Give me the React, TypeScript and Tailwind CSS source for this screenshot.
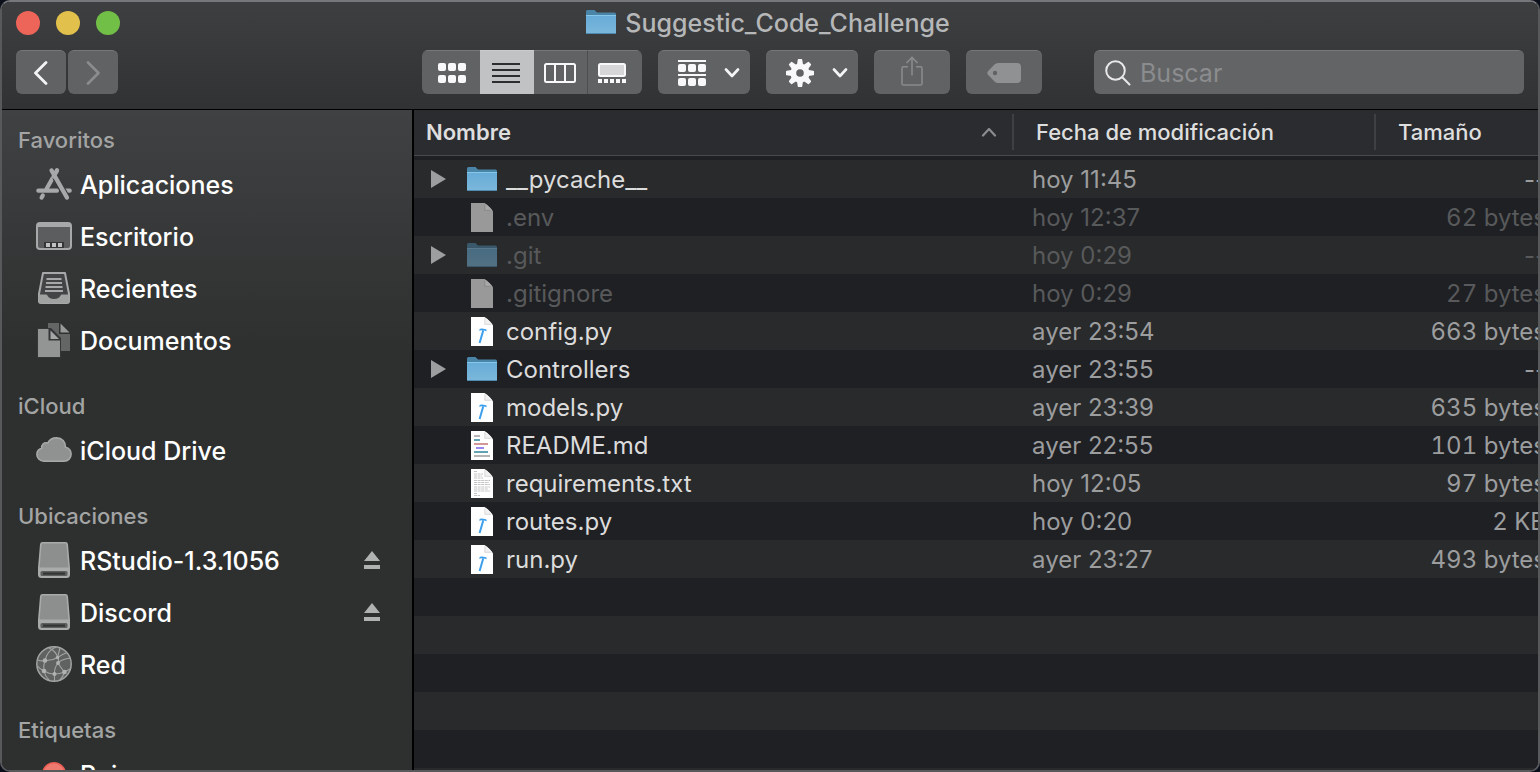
import type { ReactNode } from "react";

type Kind = "folder" | "blank" | "python" | "markdown" | "text";

interface FileRow {
  name: string;
  kind: Kind;
  modified: string;
  size: string;
  hidden?: boolean;
}

const FILES: FileRow[] = [
  { name: "__pycache__", kind: "folder", modified: "hoy 11:45", size: "--" },
  { name: ".env", kind: "blank", modified: "hoy 12:37", size: "62 bytes", hidden: true },
  { name: ".git", kind: "folder", modified: "hoy 0:29", size: "--", hidden: true },
  { name: ".gitignore", kind: "blank", modified: "hoy 0:29", size: "27 bytes", hidden: true },
  { name: "config.py", kind: "python", modified: "ayer 23:54", size: "663 bytes" },
  { name: "Controllers", kind: "folder", modified: "ayer 23:55", size: "--" },
  { name: "models.py", kind: "python", modified: "ayer 23:39", size: "635 bytes" },
  { name: "README.md", kind: "markdown", modified: "ayer 22:55", size: "101 bytes" },
  { name: "requirements.txt", kind: "text", modified: "hoy 12:05", size: "97 bytes" },
  { name: "routes.py", kind: "python", modified: "hoy 0:20", size: "2 KB" },
  { name: "run.py", kind: "python", modified: "ayer 23:27", size: "493 bytes" },
];

/* ---------- file icons ---------- */

function FolderIcon({ dim = false }: { dim?: boolean }) {
  return (
    <svg width="30" height="24" viewBox="0 0 30 24" className={dim ? "opacity-50" : ""} aria-hidden="true">
      <defs>
        <linearGradient id="folderFront" x1="0" y1="0" x2="0" y2="1">
          <stop offset="0" stopColor="#66abd8" />
          <stop offset="1" stopColor="#7cb8db" />
        </linearGradient>
      </defs>
      <path d="M0 1.5Q0 0 1.5 0H8.5L11 2.5H28.5Q30 2.5 30 4V8H0Z" fill="#4a85a8" />
      <path d="M0 5H30V22.5Q30 24 28.5 24H1.5Q0 24 0 22.5Z" fill="url(#folderFront)" />
      <path d="M0 5.5H30" stroke="#86c8ec" strokeWidth="1" />
      <path d="M0.5 23.5H29.5" stroke="#4f8bb0" strokeWidth="1" />
    </svg>
  );
}

function Page({ fill = "#ffffff", children }: { fill?: string; children?: ReactNode }) {
  const blank = fill !== "#ffffff";
  return (
    <svg width="22" height="29" viewBox="0 0 22 29" aria-hidden="true">
      <path d="M0 0H13.5Q16 1 19 4.5Q22 7.5 22 9V29H0Z" fill={fill} />
      <path d="M13.2 0.3Q14.8 3 14 7.2Q19 6.8 21.7 8.6Q20 4.5 13.2 0.3Z" fill={blank ? "#a8a8a8" : "#f1f1f1"} />
      <path d="M13.8 1.5V7.3H19.8" stroke={blank ? "#858585" : "#cfcfcf"} strokeWidth="0.8" fill="none" />
      {children}
    </svg>
  );
}

function FileIcon({ kind, dim }: { kind: Kind; dim?: boolean }) {
  if (kind === "folder") return <FolderIcon dim={dim} />;
  if (kind === "blank") return <Page fill="#999999" />;
  if (kind === "python")
    return (
      <Page>
        <path d="M12.3 13.2L8.6 26" stroke="#3d9fec" strokeWidth="2" fill="none" />
        <path d="M8.2 12.8Q9.2 11.3 11 11.5L15.2 12.3L15.8 14.2L13.2 13.6Q10.5 12.6 8.4 13.8Z" fill="#3d9fec" />
      </Page>
    );
  if (kind === "markdown")
    return (
      <Page>
        <path d="M3 5H9" stroke="#b5b5b5" strokeWidth="2" />
        <path d="M3 9H9" stroke="#62a3b4" strokeWidth="2" />
        <path d="M3 13H17" stroke="#d3969b" strokeWidth="2" />
        <path d="M5 17H13" stroke="#9a87f0" strokeWidth="2" />
        <path d="M3 21H17" stroke="#62a3b4" strokeWidth="2" />
        <path d="M3 25H19" stroke="#b5b5b5" strokeWidth="2" />
      </Page>
    );
  return (
    <Page>
      <path
        d="M3 2.5H6M3 5H12M3 7H11M3 9H12M3 11.5H19M3 13.5H18M3 15.5H19M3 18H19M3 20H17M3 22H19M3 24.5H6M3 26.5H9"
        stroke="#c4c4c4"
        strokeWidth="1"
        strokeDasharray="3 0.6"
      />
    </Page>
  );
}

/* ---------- sidebar icons ---------- */

function Side({ children }: { children: ReactNode }) {
  return (
    <svg width="36" height="36" viewBox="0 0 36 36" className="shrink-0" aria-hidden="true">
      {children}
    </svg>
  );
}

const AppsIcon = () => (
  <Side>
    <g stroke="#a7a8a9" strokeWidth="4.2" strokeLinecap="round" fill="none">
      <path d="M21 4.4L10.5 23" />
      <path d="M6.8 29.4L5.6 31.6" />
      <path d="M2.3 24.7H21" />
      <path d="M29 24.7H33.7" />
    </g>
    <path d="M15.5 4.4L31 31.6" stroke="#3a3b3c" strokeWidth="6.4" strokeLinecap="butt" />
    <path d="M21 4.4L17.5 10.6" stroke="#a7a8a9" strokeWidth="4.2" strokeLinecap="round" />
    <path d="M15.5 4.4L31 31.6" stroke="#a7a8a9" strokeWidth="4.2" strokeLinecap="round" />
  </Side>
);

const DesktopIcon = () => (
  <Side>
    <rect x="1" y="5" width="34" height="26" rx="3" fill="#5c5d5e" stroke="#a7a8a9" strokeWidth="2" />
    <path d="M1 9V7Q1 5 3 5H33Q35 5 35 7V9Z" fill="#a7a8a9" />
    <path d="M8 30V24H28V30Z" fill="#343536" />
    <path d="M10 25H14V29H10ZM16 25H20V29H16ZM22 25H26V29H22Z" fill="#c0c1c1" />
  </Side>
);

const RecentsIcon = () => (
  <Side>
    <path d="M7 3H29L33 24V31Q33 33 31 33H5Q3 33 3 31V24Z" fill="#434445" stroke="#a7a8a9" strokeWidth="2" strokeLinejoin="round" />
    <path d="M3 24.5H10Q11 24.5 11.6 25.7Q13.5 29 18 29T24.4 25.7Q25 24.5 26 24.5H33V31Q33 33 31 33H5Q3 33 3 31Z" fill="#a0a1a1" />
    <path d="M10.5 9H25.5M10 13H26M9.500 17H26.500M9 21H27" stroke="#a7a8a9" strokeWidth="2" />
  </Side>
);

const DocumentsIcon = () => (
  <Side>
    <path d="M12 1H23V12H34V29H12Z" fill="#646565" />
    <path d="M24.5 1.5L33.5 10.5H24.5Z" fill="#989999" />
    <path d="M1 6H15L25 16V36H1Z" fill="#353637" />
    <path d="M2 7H12.5V18.5H24V35H2Z" fill="#939494" />
    <path d="M14.5 8.5L23 17H14.5Z" fill="#a5a6a6" />
  </Side>
);

const CloudIcon = () => (
  <Side>
    <path
      d="M8 29.2C4 29.2 0.9 26.3 0.9 22.4C0.9 19.2 3 16.9 5.8 16.2C5.2 12.5 8.2 9.8 11.8 11C13.3 7.7 16.8 5.9 20.6 5.9C26 5.9 29.7 9.8 29.5 15.2C32.9 16 35.1 18.6 35.1 22C35.1 26.2 32.2 29.2 28 29.2Z"
      fill="#909292"
      stroke="#a7a8a8"
      strokeWidth="1.6"
    />
  </Side>
);

const DriveIcon = () => (
  <Side>
    <path d="M6.5 0.8H29.5Q31 0.8 31.2 2.4L33.2 26V32.5Q33.2 35.2 30.5 35.2H5.5Q2.8 35.2 2.8 32.5V26L4.8 2.4Q5 0.8 6.5 0.8Z" fill="#8d8f8f" stroke="#a9aaaa" strokeWidth="1.6" />
    <path d="M3 25.5H33V32.5Q33 35 30.5 35H5.5Q3 35 3 32.5Z" fill="#a9aaaa" />
    <rect x="4.5" y="29" width="27" height="5" rx="1.5" fill="#5d5f5f" />
    <rect x="7" y="30.5" width="22" height="2.2" fill="#333535" />
    <path d="M5 34.8H31" stroke="#a9aaaa" strokeWidth="1.4" />
  </Side>
);

const GlobeIcon = () => (
  <Side>
    <circle cx="18" cy="18" r="17.2" fill="#606262" stroke="#a2a4a4" strokeWidth="1.5" />
    <g stroke="#a2a4a4" strokeWidth="1.1" fill="none">
      <path d="M20 1Q11 5 9 14.500Q5 15.500 2 14" />
      <path d="M9 14.500Q16 15 21.500 11.500Q27 8 31 6.500" />
      <path d="M13 2Q20 5 22 12T22 17Q26 13 34.500 12" />
      <path d="M9 14.500Q7 20 8 25Q13 28 18.500 28Q24 28 28.500 26" />
      <path d="M22 17Q18 22 18.500 28L18.500 35" />
      <path d="M22 17Q25 22 28.500 26L34 23" />
      <path d="M8 25Q9 30 13 34" />
      <path d="M8 25Q4 23 1.500 20" />
      <path d="M28.500 26Q27 31 24 34" />
      <path d="M24 2Q23 6 21.500 11.500" />
    </g>
    <g fill="#b0b2b2">
      <circle cx="9" cy="14.500" r="2.300" />
      <circle cx="21.500" cy="11.500" r="1.700" />
      <circle cx="22" cy="17" r="1.900" />
      <circle cx="8" cy="25" r="2.300" />
      <circle cx="18.500" cy="28" r="2" />
      <circle cx="28.500" cy="26" r="2.300" />
    </g>
  </Side>
);

const RedTagIcon = () => (
  <Side>
    <circle cx="18" cy="18" r="11.200" fill="#ef7a70" stroke="#ec5f55" strokeWidth="1.600" />
  </Side>
);

const SECTIONS: { title: string; items: { label: string; icon: ReactNode; eject?: boolean }[] }[] = [
  {
    title: "Favoritos",
    items: [
      { label: "Aplicaciones", icon: <AppsIcon /> },
      { label: "Escritorio", icon: <DesktopIcon /> },
      { label: "Recientes", icon: <RecentsIcon /> },
      { label: "Documentos", icon: <DocumentsIcon /> },
    ],
  },
  { title: "iCloud", items: [{ label: "iCloud Drive", icon: <CloudIcon /> }] },
  {
    title: "Ubicaciones",
    items: [
      { label: "RStudio-1.3.1056", icon: <DriveIcon />, eject: true },
      { label: "Discord", icon: <DriveIcon />, eject: true },
      { label: "Red", icon: <GlobeIcon /> },
    ],
  },
  { title: "Etiquetas", items: [{ label: "Rojo", icon: <RedTagIcon /> }] },
];

/* ---------- toolbar icons ---------- */

const Chevron = () => (
  <svg width="16" height="10" viewBox="0 0 16 10" fill="none" aria-hidden="true">
    <path d="M2 1.500L8 8L14 1.500" stroke="#f5f5f7" strokeWidth="2.600" strokeLinecap="round" strokeLinejoin="round" />
  </svg>
);

const Squares = ({ y }: { y: number }) => (
  <g fill="#f8f8fa">
    <rect x="0" y={y} width="8" height="8" rx="2" />
    <rect x="10" y={y} width="8" height="8" rx="2" />
    <rect x="20" y={y} width="8" height="8" rx="2" />
  </g>
);

const GridIcon = () => (
  <svg width="28" height="20" viewBox="0 0 28 20" aria-hidden="true">
    <Squares y={0} />
    <Squares y={12} />
  </svg>
);

const ListIcon = () => (
  <svg width="28" height="20" viewBox="0 0 28 20" aria-hidden="true">
    <path d="M0 1H28M0 7H28M0 13H28M0 19H28" stroke="#2c2d2f" strokeWidth="2" />
  </svg>
);

const ColumnsIcon = () => (
  <svg width="32" height="20" viewBox="0 0 32 20" fill="none" aria-hidden="true">
    <rect x="1" y="1" width="30" height="18" rx="1.500" stroke="#f8f8fa" strokeWidth="2" />
    <path d="M11 1V19M21 1V19" stroke="#f8f8fa" strokeWidth="2" />
  </svg>
);

const GalleryIcon = () => (
  <svg width="28" height="20" viewBox="0 0 28 20" aria-hidden="true">
    <rect x="1" y="1" width="26" height="12" rx="1.500" fill="#d6d6d8" stroke="#f8f8fa" strokeWidth="2" />
    <path d="M0 16H4V20H0ZM6 16H10V20H6ZM12 16H16V20H12ZM18 16H22V20H18ZM24 16H28V20H24Z" fill="#f8f8fa" />
  </svg>
);

const GroupIcon = () => (
  <svg width="28" height="26" viewBox="0 0 28 26" aria-hidden="true">
    <path d="M0 1H28M0 15H28" stroke="#f8f8fa" strokeWidth="2" />
    <Squares y={4} />
    <Squares y={18} />
  </svg>
);

const GearIcon = () => (
  <svg width="28" height="28" viewBox="-14 -14 28 28" aria-hidden="true">
    <circle r="6.700" fill="none" stroke="#f8f8fa" strokeWidth="5.800" />
    <g fill="#f8f8fa">
      {[0, 45, 90, 135, 180, 225, 270, 315].map((a) => (
        <path key={a} d="M-3 -8.500L-2.200 -13.400Q-2 -14 -1.400 -14H1.400Q2 -14 2.200 -13.400L3 -8.500Z" transform={`rotate(${a})`} />
      ))}
    </g>
  </svg>
);

const ShareIcon = () => (
  <svg width="22" height="30" viewBox="0 0 22 30" fill="none" stroke="#8a8b8d" strokeWidth="1.600" aria-hidden="true">
    <path d="M7 10.800H2.500Q1 10.800 1 12.300V27.500Q1 29 2.500 29H19.500Q21 29 21 27.500V12.300Q21 10.800 19.500 10.800H15" />
    <path d="M11 19.500V1.500M5.500 7L11 1.500L16.500 7" />
  </svg>
);

const TagIcon = () => (
  <svg width="34" height="20" viewBox="0 0 34 20" aria-hidden="true">
    <path
      fillRule="evenodd"
      fill="#909193"
      d="M11 0H30Q34 0 34 4V16Q34 20 30 20H11Q9 20 7.500 18.500L1.200 12Q-0.600 10 1.200 8L7.500 1.500Q9 0 11 0ZM8 7.800A2.200 2.200 0 1 0 8 12.200A2.200 2.200 0 1 0 8 7.800Z"
    />
  </svg>
);

const SearchIcon = () => (
  <svg width="26" height="26" viewBox="0 0 26 26" fill="none" stroke="#e8e8ea" strokeWidth="2" strokeLinecap="round" className="shrink-0" aria-hidden="true">
    <circle cx="10.500" cy="10.500" r="9.300" />
    <path d="M17.300 17.300L24.500 24.500" />
  </svg>
);

function ToolButton({ label, className, children }: { label: string; className: string; children: ReactNode }) {
  return (
    <button
      type="button"
      aria-label={label}
      className={`flex h-11 shrink-0 items-center rounded-md border-t border-[#77787a] bg-[#616264] ${className}`}
    >
      {children}
    </button>
  );
}

/* ---------- window parts ---------- */

function Toolbar() {
  return (
    <header className="flex flex-col gap-3 border-b border-black bg-linear-to-b from-[#3e3f41] to-[#313233] px-3.5 pt-1 pb-[15px]">
      <div className="grid h-8 grid-cols-[1fr_auto_1fr] items-center">
        <div className="flex gap-4 pt-0.5">
          <button type="button" aria-label="Cerrar" className="size-6 rounded-full bg-[#ed6559]" />
          <button type="button" aria-label="Minimizar" className="size-6 rounded-full bg-[#e1c04c]" />
          <button type="button" aria-label="Ampliar" className="size-6 rounded-full bg-[#72bf47]" />
        </div>
        <h1 className="flex items-center gap-[9px] pr-1 text-[25px] leading-8 font-medium text-[#b6b7b8]">
          <FolderIcon />
          <span className="pt-0.5 leading-[30px]">Suggestic_Code_Challenge</span>
        </h1>
      </div>
      <div className="flex gap-4">
        <div className="flex w-[390px] shrink-0 gap-0.5">
          <ToolButton label="Atrás" className="w-[50px] justify-center">
            <svg width="16" height="24" viewBox="0 0 16 24" fill="none" aria-hidden="true">
              <path d="M13 1.500L2.500 12L13 22.500" stroke="#f4f4f5" strokeWidth="2.800" strokeLinecap="round" strokeLinejoin="round" />
            </svg>
          </ToolButton>
          <ToolButton label="Adelante" className="w-[50px] justify-center">
            <svg width="16" height="24" viewBox="0 0 16 24" fill="none" aria-hidden="true">
              <path d="M3 1.500L13.500 12L3 22.500" stroke="#8b8c8e" strokeWidth="2.600" strokeLinecap="round" strokeLinejoin="round" />
            </svg>
          </ToolButton>
        </div>
        <div role="group" aria-label="Visualización" className="flex h-11 w-[220px] shrink-0 overflow-hidden rounded-md bg-[#616264]">
          <button type="button" aria-label="Iconos" className="flex w-[58px] items-center justify-center border-t border-[#77787a] pl-0.5">
            <GridIcon />
          </button>
          <button type="button" aria-label="Lista" aria-pressed="true" className="flex w-[54px] items-center justify-center border-t border-[#cbccce] bg-[#c1c2c4] pr-0.5">
            <ListIcon />
          </button>
          <button type="button" aria-label="Columnas" className="flex w-[54px] items-center justify-center border-t border-r border-t-[#77787a] border-r-[#4d4e50] pr-0.5">
            <ColumnsIcon />
          </button>
          <button type="button" aria-label="Galería" className="flex w-[54px] items-center justify-center border-t border-[#77787a] pr-1.5">
            <GalleryIcon />
          </button>
        </div>
        <ToolButton label="Agrupar" className="w-[92px] justify-between pr-2.5 pl-5">
          <GroupIcon />
          <Chevron />
        </ToolButton>
        <ToolButton label="Acciones" className="w-[92px] justify-between pr-2.5 pl-5">
          <GearIcon />
          <Chevron />
        </ToolButton>
        <ToolButton label="Compartir" className="w-[76px] justify-center pb-1">
          <ShareIcon />
        </ToolButton>
        <ToolButton label="Editar etiquetas" className="w-[76px] justify-center">
          <TagIcon />
        </ToolButton>
        <label className="ml-9 flex h-11 min-w-0 flex-1 items-center gap-[9px] rounded-md border-t border-[#77787a] bg-[#636466] pr-3 pl-[11px]">
          <SearchIcon />
          <input
            type="search"
            aria-label="Buscar"
            placeholder="Buscar"
            className="min-w-0 flex-1 bg-transparent pt-0.5 text-[25px] text-white outline-none placeholder:text-[#8b8c8e]"
          />
        </label>
      </div>
    </header>
  );
}

function Sidebar() {
  return (
    <nav
      aria-label="Barra lateral"
      className="flex w-[412px] shrink-0 flex-col gap-[22px] overflow-hidden border-r-2 border-black bg-[#2e302f] bg-[linear-gradient(#404143,#2e302f_240px)] pt-3"
    >
      {SECTIONS.map((section) => (
        <section key={section.title} className="shrink-0">
          <h2 className="pl-4 text-[22px] leading-9 font-medium text-[#a3a4a4]">{section.title}</h2>
          <ul>
            {section.items.map((item) => (
              <li key={item.label} className="flex h-[52px] items-center justify-between pr-8 pl-[34px]">
                <a href="#" className="flex items-center gap-2 text-[25px] leading-8 font-medium text-white">
                  {item.icon}
                  <span className="pt-0.5">{item.label}</span>
                </a>
                {item.eject && (
                  <button type="button" aria-label={`Expulsar ${item.label}`}>
                    <svg width="16" height="18" viewBox="0 0 16 18" fill="#b0b1b1" aria-hidden="true">
                      <path d="M8 0L16 10H0ZM0 14H16V18H0Z" />
                    </svg>
                  </button>
                )}
              </li>
            ))}
          </ul>
        </section>
      ))}
    </nav>
  );
}

function FileList() {
  const head = "h-[46px] border-b border-[#48494c] bg-[#2b2c30] p-0 pb-0.5 text-left text-[22px] text-[#dedede]";
  return (
    <main className="min-w-0 flex-1 overflow-hidden bg-[linear-gradient(#292a2b_50%,#1f2024_50%)] bg-[length:100%_76px] bg-[position:0_50px]">
      <table className="w-[calc(100%+12px)] table-fixed border-separate border-spacing-0 leading-8">
        <colgroup>
          <col />
          <col className="w-[362px]" />
          <col className="w-[176px]" />
        </colgroup>
        <thead>
          <tr>
            <th scope="col" aria-sort="ascending" className={`${head} font-semibold`}>
              <button type="button" className="flex w-full items-center justify-between pr-[15px] pl-3">
                Nombre
                <svg width="16" height="10" viewBox="0 0 16 10" fill="none" aria-hidden="true">
                  <path d="M2 8.500L8 2L14 8.500" stroke="#8b8c8e" strokeWidth="2.200" strokeLinecap="round" strokeLinejoin="round" />
                </svg>
              </button>
            </th>
            <th scope="col" className={`${head} font-medium`}>
              <button type="button" className="flex h-9 w-full items-center border-l-2 border-[#3f4043] pl-[22px]">
                Fecha de modificación
              </button>
            </th>
            <th scope="col" className={`${head} font-medium`}>
              <button type="button" className="flex h-9 w-full items-center border-l-2 border-[#3f4043] pl-[22px]">
                Tamaño
              </button>
            </th>
          </tr>
        </thead>
        <tbody className="text-2xl leading-8 before:block before:h-1 before:content-['']">
          {FILES.map((file) => (
            <tr key={file.name} className={file.hidden ? "text-[#58595a]" : "text-[#9c9d9e]"}>
              <td className="h-[38px] p-0">
                <div className="flex items-center pl-[17px]">
                  {file.kind === "folder" ? (
                    <button type="button" aria-label={`Expandir ${file.name}`} className="w-9 shrink-0">
                      <svg width="15" height="18" viewBox="0 0 15 18" aria-hidden="true">
                        <path d="M0 0L15 9L0 18Z" fill="#9d9e9f" />
                      </svg>
                    </button>
                  ) : (
                    <span className="w-9 shrink-0" />
                  )}
                  <span className="mr-[9px] flex w-[30px] shrink-0 justify-center">
                    <FileIcon kind={file.kind} dim={file.hidden} />
                  </span>
                  <span className={file.hidden ? "pt-0.5" : "pt-0.5 text-[#dcdcdc]"}>{file.name}</span>
                </div>
              </td>
              <td className="p-0 pt-0.5 pl-5">{file.modified}</td>
              <td
                className={
                  file.kind === "folder"
                    ? "p-0 pt-0.5 pr-1 text-right whitespace-nowrap"
                    : "p-0 pt-0.5 pr-1 text-right whitespace-nowrap tabular-nums"
                }
              >
                {file.size}
              </td>
            </tr>
          ))}
        </tbody>
      </table>
    </main>
  );
}

export default function App() {
  return (
    <div className="h-screen bg-[#0a0f1a] font-[Inter,sans-serif]">
      <div className="flex h-full flex-col overflow-hidden rounded-[10px] border-2 border-[#58595a] border-t-[#76777a]">
        <Toolbar />
        <div className="flex min-h-0 flex-1">
          <Sidebar />
          <FileList />
        </div>
      </div>
    </div>
  );
}
